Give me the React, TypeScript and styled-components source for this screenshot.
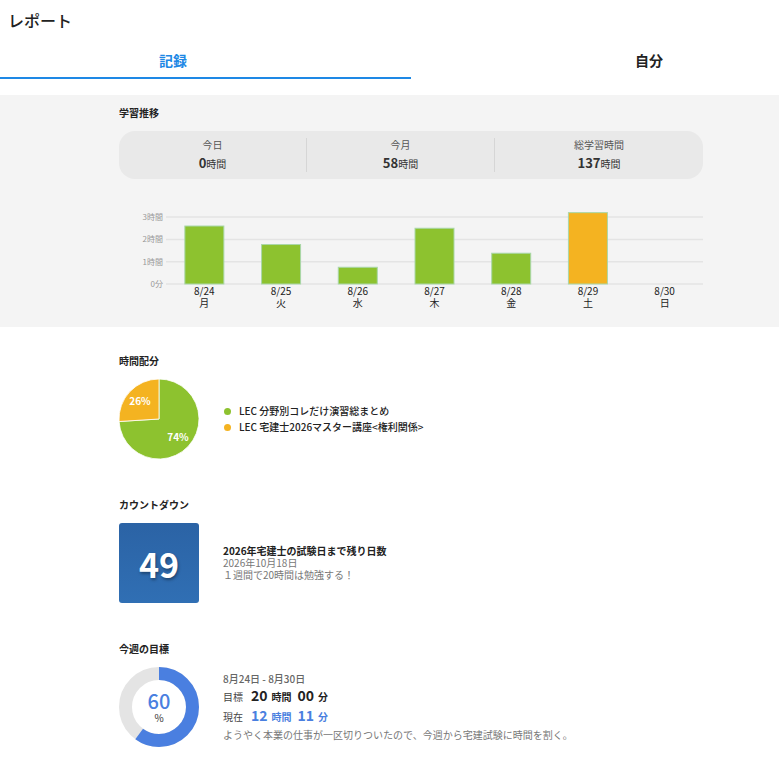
import React from 'react'
import styled, { createGlobalStyle } from 'styled-components'

const GlobalStyle = createGlobalStyle`
  html, body {
    margin: 0;
    padding: 0;
    background: #fff;
    font-family: "Noto Sans CJK JP", "Noto Sans", sans-serif;
    color: #222;
  }
`;

type Bar = { date: string; day: string; hours: number; color?: string };

const bars: Bar[] = [
  { date: '8/24', day: '月', hours: 2.6 },
  { date: '8/25', day: '火', hours: 1.77 },
  { date: '8/26', day: '水', hours: 0.75 },
  { date: '8/27', day: '木', hours: 2.5 },
  { date: '8/28', day: '金', hours: 1.38 },
  { date: '8/29', day: '土', hours: 3.2, color: '#f4b321' },
  { date: '8/30', day: '日', hours: 0 },
];

const stats = [
  { label: '今日', value: '0' },
  { label: '今月', value: '58' },
  { label: '総学習時間', value: '137' },
];

const legend = [
  { color: '#8dc22f', text: 'LEC 分野別コレだけ演習総まとめ' },
  { color: '#f4b321', text: 'LEC 宅建士2026マスター講座<権利関係>' },
];

const BarChart = () => {
  const left = 47;
  const right = 584;
  const base = 89;
  const unit = 22.3;
  const col = (right - left) / 7;
  return (
    <svg width="584" height="118" viewBox="0 0 584 118">
      {[0, 1, 2, 3].map((h) => (
        <g key={h}>
          <line x1={left} x2={right} y1={base - h * unit} y2={base - h * unit} stroke="#e4e4e4" strokeWidth="1.5" />
          <text x={left - 3} y={base - h * unit + 3} fontSize="8" fill="#999" textAnchor="end">
            {h === 0 ? '0分' : `${h}時間`}
          </text>
        </g>
      ))}
      {bars.map((b, i) => {
        const cx = left + col * i + col / 2;
        const height = b.hours * unit;
        return (
          <g key={b.date}>
            {height > 0 && (
              <rect
                x={cx - 19.5}
                y={base - height}
                width="39"
                height={height}
                fill={b.color ?? '#8dc22f'}
                stroke="#a9d7a8"
                strokeWidth="1"
              />
            )}
            <text x={cx} y={base + 11} fontSize="10" fill="#222" textAnchor="middle">{b.date}</text>
            <text x={cx} y={base + 23} fontSize="10" fill="#222" textAnchor="middle">{b.day}</text>
          </g>
        );
      })}
    </svg>
  );
};

const polar = (cx: number, cy: number, r: number, frac: number) => {
  const a = frac * Math.PI * 2 - Math.PI / 2;
  return [cx + r * Math.cos(a), cy + r * Math.sin(a)];
};

const PieChart = () => {
  const [x1, y1] = polar(40, 40, 40, 0);
  const [x2, y2] = polar(40, 40, 40, 0.74);
  return (
    <svg width="80" height="80" viewBox="0 0 80 80">
      <path d={`M40 40 L${x1} ${y1} A40 40 0 1 1 ${x2} ${y2} Z`} fill="#8dc22f" stroke="#fff" strokeWidth="0.8" />
      <path d={`M40 40 L${x2} ${y2} A40 40 0 0 1 ${x1} ${y1} Z`} fill="#f4b321" stroke="#fff" strokeWidth="0.8" />
      <text x="21" y="26" fontSize="10" fontWeight="700" fill="#fff" textAnchor="middle">26%</text>
      <text x="59" y="62" fontSize="10" fontWeight="700" fill="#fff" textAnchor="middle">74%</text>
    </svg>
  );
};

const Donut = ({ percent }: { percent: number }) => {
  const r = 33.5;
  const c = 2 * Math.PI * r;
  return (
    <DonutWrap>
      <svg width="80" height="80" viewBox="0 0 80 80">
        <circle cx="40" cy="40" r={r} fill="none" stroke="#e4e4e4" strokeWidth="13" />
        <circle
          cx="40"
          cy="40"
          r={r}
          fill="none"
          stroke="#4a7fe0"
          strokeWidth="13"
          strokeDasharray={`${(c * percent) / 100} ${c}`}
          transform="rotate(-90 40 40)"
        />
      </svg>
      <DonutLabel>
        <DonutValue>{percent}</DonutValue>
        <DonutUnit>%</DonutUnit>
      </DonutLabel>
    </DonutWrap>
  );
};

export default function App() {
  return (
    <Page>
      <GlobalStyle />
      <Header>レポート</Header>
      <Tabs>
        <Tab $active>記録</Tab>
        <Tab>自分</Tab>
        <Indicator />
      </Tabs>

      <GraySection>
        <Column>
          <SectionTitle>学習推移</SectionTitle>
          <StatCard>
            {stats.map((s) => (
              <Stat key={s.label}>
                <StatLabel>{s.label}</StatLabel>
                <StatValue>
                  {s.value}
                  <small>時間</small>
                </StatValue>
              </Stat>
            ))}
          </StatCard>
          <ChartWrap>
            <BarChart />
          </ChartWrap>
        </Column>
      </GraySection>

      <WhiteSection>
        <Column>
          <Block>
            <SectionTitle>時間配分</SectionTitle>
            <Row>
              <PieChart />
              <Legend>
                {legend.map((l) => (
                  <LegendItem key={l.text}>
                    <Dot $color={l.color} />
                    {l.text}
                  </LegendItem>
                ))}
              </Legend>
            </Row>
          </Block>

          <Block>
            <SectionTitle>カウントダウン</SectionTitle>
            <Row>
              <CountBox>49</CountBox>
              <Info>
                <InfoTitle>2026年宅建士の試験日まで残り日数</InfoTitle>
                <InfoSub>2026年10月18日</InfoSub>
                <InfoSub>１週間で20時間は勉強する！</InfoSub>
              </Info>
            </Row>
          </Block>

          <Block>
            <SectionTitle>今週の目標</SectionTitle>
            <Row>
              <Donut percent={60} />
              <Info>
                <Period>8月24日 - 8月30日</Period>
                <GoalLine>
                  <GoalLabel>目標</GoalLabel>
                  <GoalNum>20</GoalNum>
                  <GoalUnit>時間</GoalUnit>
                  <GoalNum>00</GoalNum>
                  <GoalUnit>分</GoalUnit>
                </GoalLine>
                <GoalLine $blue>
                  <GoalLabel>現在</GoalLabel>
                  <GoalNum>12</GoalNum>
                  <GoalUnit>時間</GoalUnit>
                  <GoalNum>11</GoalNum>
                  <GoalUnit>分</GoalUnit>
                </GoalLine>
                <Comment>ようやく本業の仕事が一区切りついたので、今週から宅建試験に時間を割く。</Comment>
              </Info>
            </Row>
          </Block>
        </Column>
      </WhiteSection>
    </Page>
  );
}

const Page = styled.div`
  width: 779px;
`;

const Header = styled.h1`
  margin: 0;
  padding: 9px 8px 0;
  font-size: 16px;
  font-weight: 500;
  line-height: 22px;
  color: #222;
`;

const Tabs = styled.div`
  position: relative;
  display: grid;
  grid-template-columns: 346px 173px 260px;
  height: 36px;
  margin-top: 12px;
`;

const Tab = styled.div<{ $active?: boolean }>`
  display: flex;
  align-items: center;
  justify-content: center;
  padding-bottom: 2px;
  font-size: 14px;
  font-weight: 700;
  color: ${(p) => (p.$active ? '#1e88e5' : '#222')};
  &:nth-child(2) {
    grid-column: 3;
  }
`;

const Indicator = styled.div`
  position: absolute;
  left: 0;
  bottom: 0;
  width: 411px;
  height: 2px;
  background: #1e88e5;
`;

const GraySection = styled.section`
  background: #f4f4f4;
  margin-top: 16px;
  padding: 10px 0 14px;
`;

const WhiteSection = styled.section`
  padding: 26px 0 20px;
`;

const Column = styled.div`
  width: 584px;
  margin-left: 119px;
`;

const SectionTitle = styled.h2`
  margin: 0;
  font-size: 10px;
  font-weight: 700;
  line-height: 16px;
  color: #222;
`;

const StatCard = styled.div`
  display: grid;
  grid-template-columns: 187px 188px 1fr;
  margin-top: 10px;
  height: 48px;
  border-radius: 16px;
  background: #e9e9e9;
  align-items: center;
`;

const Stat = styled.div`
  display: flex;
  flex-direction: column;
  align-items: center;
  justify-content: center;
  gap: 2px;
  height: 34px;
  & + & {
    border-left: 1px solid #d6d6d6;
  }
`;

const StatLabel = styled.div`
  font-size: 10px;
  line-height: 14px;
  color: #555;
`;

const StatValue = styled.div`
  font-size: 13px;
  font-weight: 700;
  line-height: 18px;
  color: #333;
  small {
    font-size: 10px;
    font-weight: 400;
  }
`;

const ChartWrap = styled.div`
  margin-top: 16px;
  height: 118px;
`;

const Block = styled.div`
  & + & {
    margin-top: 38px;
  }
`;

const Row = styled.div`
  display: flex;
  align-items: center;
  gap: 24px;
  margin-top: 10px;
`;

const Legend = styled.ul`
  list-style: none;
  margin: 0;
  padding: 0;
  display: flex;
  flex-direction: column;
  gap: 2px;
`;

const LegendItem = styled.li`
  display: flex;
  align-items: center;
  gap: 8px;
  font-size: 10px;
  font-weight: 500;
  line-height: 14px;
  color: #222;
`;

const Dot = styled.span<{ $color: string }>`
  width: 7px;
  height: 7px;
  border-radius: 50%;
  background: ${(p) => p.$color};
  margin-left: 1px;
`;

const CountBox = styled.div`
  width: 80px;
  height: 80px;
  border-radius: 3px;
  background: linear-gradient(#2b63a5, #306fb4);
  color: #fff;
  display: flex;
  align-items: center;
  justify-content: center;
  font-size: 34px;
  font-weight: 700;
  text-shadow: 1px 2px 3px rgba(0, 0, 0, 0.35);
`;

const Info = styled.div`
  display: flex;
  flex-direction: column;
`;

const InfoTitle = styled.div`
  font-size: 10px;
  font-weight: 700;
  line-height: 12px;
  color: #222;
`;

const InfoSub = styled.div`
  font-size: 10px;
  line-height: 12px;
  color: #777;
`;

const DonutWrap = styled.div`
  position: relative;
  width: 80px;
  height: 80px;
`;

const DonutLabel = styled.div`
  position: absolute;
  inset: 0;
  display: flex;
  flex-direction: column;
  align-items: center;
  justify-content: center;
`;

const DonutValue = styled.div`
  font-size: 20px;
  font-weight: 500;
  line-height: 22px;
  color: #4a7fe0;
`;

const DonutUnit = styled.div`
  font-size: 10px;
  line-height: 12px;
  color: #333;
`;

const Period = styled.div`
  font-size: 10px;
  font-weight: 500;
  line-height: 14px;
  color: #666;
`;

const GoalLine = styled.div<{ $blue?: boolean }>`
  display: flex;
  align-items: baseline;
  gap: 4px;
  line-height: 18px;
  color: ${(p) => (p.$blue ? '#4a7fe0' : '#222')};
`;

const GoalLabel = styled.span`
  font-size: 10px;
  color: #444;
  margin-right: 4px;
`;

const GoalNum = styled.span`
  font-size: 14px;
  font-weight: 700;
`;

const GoalUnit = styled.span`
  font-size: 10px;
  font-weight: 700;
  margin-right: 2px;
`;

const Comment = styled.div`
  font-size: 10px;
  line-height: 14px;
  color: #777;
  margin-top: 2px;
`;
